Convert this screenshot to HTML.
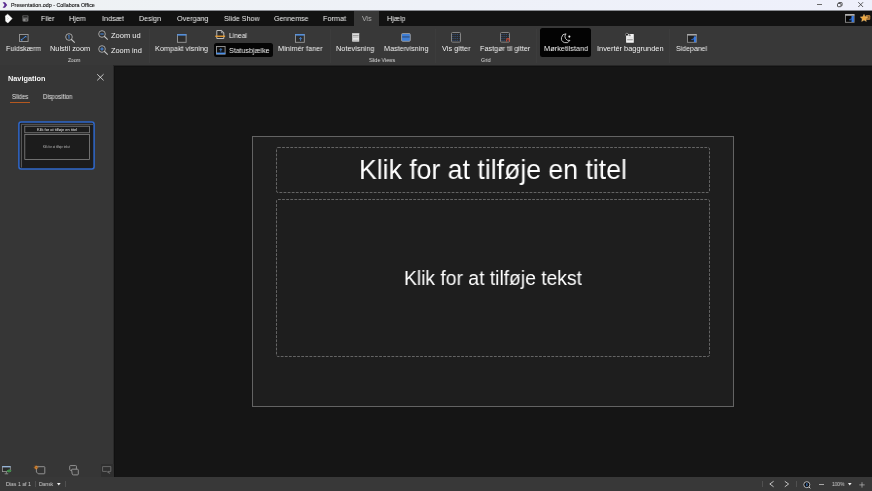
<!DOCTYPE html>
<html><head><meta charset="utf-8">
<style>
*{margin:0;padding:0;box-sizing:border-box}
html,body{width:872px;height:491px;overflow:hidden;background:#161616}
body{font-family:"Liberation Sans",sans-serif;position:relative}
.abs{position:absolute}
.tx{position:absolute;white-space:nowrap;will-change:transform}
svg{overflow:visible}
</style></head><body>
<div class="abs" style="left:0px;top:0px;width:872px;height:11px;background:linear-gradient(90deg,#eef2f3 0%,#eef1f8 50%,#eef0fb 100%);"></div>
<div class="abs" style="left:0px;top:10px;width:872px;height:1px;background:#8a8c92;"></div>
<div class="abs" style="left:0px;top:11px;width:872px;height:15px;background:#121212;"></div>
<div class="abs" style="left:354px;top:11px;width:25px;height:15px;background:#383838;"></div>
<div class="abs" style="left:0px;top:26px;width:872px;height:39px;background:#383838;"></div>
<div class="abs" style="left:0px;top:65px;width:872px;height:1px;background:#262626;"></div>
<div class="abs" style="left:0px;top:66px;width:113px;height:411px;background:#363636;"></div>
<div class="abs" style="left:113px;top:66px;width:759px;height:411px;background:#151515;"></div>
<div class="abs" style="left:113px;top:66px;width:759px;height:1px;background:#111111;"></div>
<div class="abs" style="left:113px;top:66px;width:1px;height:411px;background:#2a2a2a;"></div>
<div class="abs" style="left:114px;top:66px;width:1px;height:411px;background:#111111;"></div>
<div class="abs" style="left:0px;top:65px;width:113px;height:2px;background:#363636;"></div>
<div class="abs" style="left:0px;top:477px;width:872px;height:14px;background:#383838;"></div>
<svg class="abs" style="left:2px;top:2px" width="6" height="6" viewBox="0 0 6 6"><path d="M0.6 0.3 L3 0.3 L5.2 3 L3 5.7 L0.6 5.7 L2.6 3 Z" fill="#5a2d91"/></svg>
<div class="tx" style="left:10.70px;top:0px;font-size:5.39px;line-height:10px;color:#151515;-webkit-text-stroke:0.12px #222;will-change:transform;">Presentation.odp - Collabora Office</div>
<div class="abs" style="left:817px;top:4px;width:5px;height:1px;background:#6a6a6a;"></div>
<svg class="abs" style="left:836.6px;top:2px" width="6" height="6" viewBox="0 0 6 6"><rect x="0.5" y="1.5" width="3.5" height="3.2" rx="0.7" fill="none" stroke="#3a3a3a" stroke-width="0.85"/><path d="M1.5 1.3 V1 Q1.5 0.5 2 0.5 H4.5 Q5.1 0.5 5.1 1 V3.4 Q5.1 3.9 4.6 3.9 H4.2" fill="none" stroke="#3a3a3a" stroke-width="0.8"/></svg>
<svg class="abs" style="left:858px;top:2px" width="6" height="6" viewBox="0 0 6 6"><path d="M0.3 0.2 L5.1 5 M5.1 0.2 L0.3 5" stroke="#333" stroke-width="0.8" fill="none"/></svg>
<svg class="abs" style="left:5px;top:13.8px" width="8" height="9.2" viewBox="0 0 8 9.2"><path d="M2.7 0.3 L7.2 4.5 L2.9 8.9 L0.7 7.3 L0.4 1.9 Z" fill="#ffffff" stroke="#ffffff" stroke-width="0.5" stroke-linejoin="round"/><path d="M2.3 3.3 L3.5 4.5 L2.3 5.7" stroke="#b8b8b8" stroke-width="0.6" fill="none"/></svg>
<svg class="abs" style="left:21.6px;top:15px" width="7" height="7" viewBox="0 0 7 7"><rect x="0.3" y="0.3" width="6.2" height="6.2" rx="0.9" fill="#5a5a5a"/><rect x="1.4" y="0.9" width="4" height="1.5" fill="#2a2a2a"/><rect x="1.3" y="3.7" width="4.2" height="2.6" fill="#8a8a8a"/><rect x="3.6" y="4.2" width="1.1" height="1.6" fill="#2a2a2a"/></svg>
<div class="tx" style="left:40.60px;top:12px;font-size:7.40px;line-height:13px;color:#f1f1f1;transform:scaleX(0.9313);transform-origin:0 0;">Filer</div>
<div class="tx" style="left:69.40px;top:12px;font-size:7.40px;line-height:13px;color:#f1f1f1;transform:scaleX(0.9671);transform-origin:0 0;">Hjem</div>
<div class="tx" style="left:101.50px;top:12px;font-size:7.40px;line-height:13px;color:#f1f1f1;transform:scaleX(0.9725);transform-origin:0 0;">Indsæt</div>
<div class="tx" style="left:139.00px;top:12px;font-size:7.40px;line-height:13px;color:#f1f1f1;transform:scaleX(0.9551);transform-origin:0 0;">Design</div>
<div class="tx" style="left:176.50px;top:12px;font-size:7.40px;line-height:13px;color:#f1f1f1;transform:scaleX(0.9693);transform-origin:0 0;">Overgang</div>
<div class="tx" style="left:223.50px;top:12px;font-size:7.40px;line-height:13px;color:#f1f1f1;transform:scaleX(0.9589);transform-origin:0 0;">Slide Show</div>
<div class="tx" style="left:273.50px;top:12px;font-size:7.40px;line-height:13px;color:#f1f1f1;transform:scaleX(0.9531);transform-origin:0 0;">Gennemse</div>
<div class="tx" style="left:323.00px;top:12px;font-size:7.40px;line-height:13px;color:#f1f1f1;transform:scaleX(0.9814);transform-origin:0 0;">Format</div>
<div class="tx" style="left:362.00px;top:12px;font-size:7.40px;line-height:13px;color:#b4b4b4;transform:scaleX(0.9363);transform-origin:0 0;">Vis</div>
<div class="tx" style="left:386.50px;top:12px;font-size:7.40px;line-height:13px;color:#f1f1f1;transform:scaleX(0.9572);transform-origin:0 0;">Hjælp</div>
<svg class="abs" style="left:845px;top:14px" width="10" height="9" viewBox="0 0 10 9"><rect x="0.5" y="0.5" width="8.6" height="7.8" fill="#060606" stroke="#8c8c8c" stroke-width="0.9"/><rect x="0.3" y="0.2" width="9" height="1.5" fill="#bcbcbc"/><rect x="6.5" y="2" width="2.4" height="6" fill="#3a7be0"/><path d="M4.2 5.8 L6.2 5.8 L6.2 3.8" stroke="#2f68c4" stroke-width="1" fill="none"/></svg>
<svg class="abs" style="left:860px;top:14px" width="11" height="8" viewBox="0 0 11 8"><rect x="5.6" y="1.1" width="4.7" height="4.9" rx="1.2" fill="#a97738"/><path d="M7.6 2.4 Q8.6 2.1 8.8 3.1 Q8.8 3.8 7.9 4" stroke="#6f4a1f" stroke-width="0.6" fill="none"/><path d="M4 0.3 L5.1 2.7 L7.7 3 L5.8 4.8 L6.3 7.4 L4 6.1 L1.7 7.4 L2.2 4.8 L0.3 3 L2.9 2.7 Z" fill="#f0a83e" stroke="#f6cc88" stroke-width="0.4"/></svg>
<svg class="abs" style="left:19px;top:34px" width="10" height="8" viewBox="0 0 10 8"><rect x="0.5" y="0.5" width="8.6" height="7" fill="#2d2d2d" stroke="#9b9b9b" stroke-width="0.9"/><path d="M2.2 6 L7 2.2" stroke="#4a8fe8" stroke-width="0.9"/><path d="M5.4 1.9 L7.4 1.9 L7.4 3.8 Z" fill="#4a8fe8"/><path d="M1.8 4.6 L1.8 6.4 L3.8 6.4 Z" fill="#4a8fe8"/></svg>
<div class="tx" style="left:5.90px;top:42px;font-size:7.40px;line-height:13px;color:#f1f1f1;transform:scaleX(0.9539);transform-origin:0 0;">Fuldskærm</div>
<svg class="abs" style="left:64.4px;top:31.9px" width="12" height="12" viewBox="0 0 12 12"><circle cx="5" cy="5" r="3.3" fill="#2f2f2f" stroke="#b9b9b9" stroke-width="0.85"/><path d="M7.5 7.5 L10.5 10.3" stroke="#c4c4c4" stroke-width="1.05" stroke-linecap="round"/><path d="M5 3.2 V6.8 M4.3 3.9 L5 3.2" stroke="#4a8fe8" stroke-width="0.9" fill="none"/></svg>
<div class="tx" style="left:50.40px;top:42px;font-size:7.40px;line-height:13px;color:#f1f1f1;">Nulstil zoom</div>
<div class="tx" style="left:67.50px;top:55px;font-size:5.70px;line-height:10px;color:#dcdcdc;transform:scaleX(0.8579);transform-origin:0 0;">Zoom</div>
<svg class="abs" style="left:97.1px;top:28.6px" width="12" height="12" viewBox="0 0 12 12"><circle cx="5" cy="5" r="3.3" fill="#2f2f2f" stroke="#b9b9b9" stroke-width="0.85"/><path d="M7.5 7.5 L10.5 10.3" stroke="#c4c4c4" stroke-width="1.05" stroke-linecap="round"/><path d="M3.3 5 H6.7" stroke="#4a8fe8" stroke-width="1"/></svg>
<div class="tx" style="left:111.30px;top:29px;font-size:7.40px;line-height:13px;color:#f1f1f1;transform:scaleX(1.0204);transform-origin:0 0;">Zoom ud</div>
<svg class="abs" style="left:97.1px;top:44.3px" width="12" height="12" viewBox="0 0 12 12"><circle cx="5" cy="5" r="3.3" fill="#2f2f2f" stroke="#b9b9b9" stroke-width="0.85"/><path d="M7.5 7.5 L10.5 10.3" stroke="#c4c4c4" stroke-width="1.05" stroke-linecap="round"/><path d="M3.3 5 H6.7 M5 3.3 V6.7" stroke="#4a8fe8" stroke-width="1"/></svg>
<div class="tx" style="left:111.30px;top:44px;font-size:7.40px;line-height:13px;color:#f1f1f1;">Zoom ind</div>
<div class="abs" style="left:149px;top:29px;width:1px;height:34px;background:#3c3c3c;"></div>
<svg class="abs" style="left:177px;top:34px" width="10" height="9" viewBox="0 0 10 9"><rect x="0.5" y="0.5" width="8.6" height="7.8" fill="#2d2d2d" stroke="#9b9b9b" stroke-width="0.9"/><rect x="0.3" y="0.2" width="9" height="1.4" fill="#4a8fe8"/></svg>
<div class="tx" style="left:154.90px;top:42px;font-size:7.40px;line-height:13px;color:#f1f1f1;transform:scaleX(0.9780);transform-origin:0 0;">Kompakt visning</div>
<svg class="abs" style="left:215px;top:30px" width="11" height="9" viewBox="0 0 11 9"><path d="M1.8 0.5 H6.6 L8.8 2.6 V8.5 H1.8 Z" fill="#2d2d2d" stroke="#c9c9c9" stroke-width="0.9"/><path d="M6.4 0.6 V2.8 H8.6" fill="none" stroke="#c9c9c9" stroke-width="0.7"/><rect x="0.3" y="5.6" width="9.8" height="1.3" fill="#f0a030"/></svg>
<div class="tx" style="left:229.00px;top:29px;font-size:7.40px;line-height:13px;color:#f1f1f1;transform:scaleX(0.9113);transform-origin:0 0;">Lineal</div>
<div class="abs" style="left:213.5px;top:43px;width:59px;height:14px;background:#050505;border-radius:2.5px;"></div>
<svg class="abs" style="left:215.5px;top:46px" width="10" height="9" viewBox="0 0 10 9"><rect x="0.5" y="0.5" width="8.6" height="7.6" fill="#101010" stroke="#9b9b9b" stroke-width="0.9"/><rect x="0.3" y="6.6" width="9" height="1.6" fill="#4a8fe8"/><path d="M4.8 5.6 V2.8 M3.6 3.8 L4.8 2.6 L6 3.8" stroke="#4a8fe8" stroke-width="0.8" fill="none"/></svg>
<div class="tx" style="left:229.00px;top:44px;font-size:7.40px;line-height:13px;color:#f1f1f1;transform:scaleX(0.9491);transform-origin:0 0;">Statusbjælke</div>
<svg class="abs" style="left:295px;top:34px" width="10" height="9" viewBox="0 0 10 9"><rect x="0.5" y="0.5" width="8.8" height="7.8" fill="#2d2d2d" stroke="#9b9b9b" stroke-width="0.9"/><rect x="0.3" y="0.2" width="9.2" height="1.4" fill="#4a8fe8"/><path d="M5.6 6.8 V3.6 M4.3 4.8 L5.6 3.5 L6.9 4.8" stroke="#4a8fe8" stroke-width="0.8" fill="none"/></svg>
<div class="tx" style="left:278.00px;top:42px;font-size:7.40px;line-height:13px;color:#f1f1f1;transform:scaleX(0.9882);transform-origin:0 0;">Minimér faner</div>
<div class="abs" style="left:329.5px;top:29px;width:1px;height:34px;background:#3c3c3c;"></div>
<svg class="abs" style="left:352px;top:33px" width="8" height="9" viewBox="0 0 8 9"><rect x="0.2" y="0.2" width="7" height="8.4" fill="#e4e4e4"/><rect x="0.2" y="0.2" width="7" height="1" fill="#bdbdbd"/><rect x="0.8" y="2.2" width="5.8" height="1.1" fill="#8e8e8e"/><rect x="0.8" y="4.2" width="5.8" height="0.6" fill="#b0b0b0"/><rect x="0.8" y="6.6" width="5.8" height="1.6" fill="#c2c2c2"/></svg>
<div class="tx" style="left:336.10px;top:42px;font-size:7.40px;line-height:13px;color:#f1f1f1;transform:scaleX(0.9905);transform-origin:0 0;">Notevisning</div>
<svg class="abs" style="left:401px;top:33px" width="10" height="9" viewBox="0 0 10 9"><rect x="0.5" y="0.5" width="8.8" height="7.8" rx="1.2" fill="#3f7fd6" stroke="#9b9b9b" stroke-width="0.9"/><rect x="1.2" y="3.5" width="7.4" height="0.9" fill="#2c3f5e"/></svg>
<div class="tx" style="left:383.80px;top:42px;font-size:7.40px;line-height:13px;color:#f1f1f1;transform:scaleX(0.9748);transform-origin:0 0;">Mastervisning</div>
<div class="tx" style="left:369.00px;top:55px;font-size:5.70px;line-height:10px;color:#dcdcdc;transform:scaleX(0.8924);transform-origin:0 0;">Slide Views</div>
<div class="abs" style="left:434.5px;top:29px;width:1px;height:34px;background:#3c3c3c;"></div>
<svg class="abs" style="left:451.2px;top:32.2px" width="10" height="10" viewBox="0 0 10 10"><rect x="0.5" y="0.5" width="9" height="9.6" rx="1" fill="#2a2a2a" stroke="#8d8d8d" stroke-width="0.9"/><path d="M1.3 2.5 H8.7 M1.3 4.5 H8.7 M1.3 6.5 H8.7 M1.3 8.4 H8.7" stroke="#3b69ad" stroke-width="0.55" stroke-dasharray="1.3 0.9"/></svg>
<div class="tx" style="left:441.50px;top:42px;font-size:7.40px;line-height:13px;color:#f1f1f1;transform:scaleX(0.9911);transform-origin:0 0;">Vis gitter</div>
<svg class="abs" style="left:500.2px;top:32.2px" width="10" height="10" viewBox="0 0 10 10"><rect x="0.5" y="0.5" width="9" height="9.6" rx="1" fill="#2a2a2a" stroke="#8d8d8d" stroke-width="0.9"/><path d="M1.3 2.5 H8.7 M1.3 4.5 H8.7 M1.3 6.5 H8.7 M1.3 8.4 H8.7" stroke="#3b69ad" stroke-width="0.55" stroke-dasharray="1.3 0.9"/><path d="M6.7 9.6 V8 Q6.7 6.6 8 6.6 Q9.3 6.6 9.3 8 V9.6" stroke="#cc4630" stroke-width="1.1" fill="none"/></svg>
<div class="tx" style="left:479.70px;top:42px;font-size:7.40px;line-height:13px;color:#f1f1f1;transform:scaleX(0.9805);transform-origin:0 0;">Fastgør til gitter</div>
<div class="tx" style="left:481.00px;top:55px;font-size:5.70px;line-height:10px;color:#dcdcdc;transform:scaleX(0.9008);transform-origin:0 0;">Grid</div>
<div class="abs" style="left:536px;top:29px;width:1px;height:34px;background:#3c3c3c;"></div>
<div class="abs" style="left:539.6px;top:27.8px;width:51.4px;height:29px;background:#030303;border-radius:2.5px;"></div>
<svg class="abs" style="left:560.6px;top:32.6px" width="12" height="12" viewBox="0 0 12 12"><g transform="scale(0.9)"><path d="M5.6 0.9 A5 5 0 1 0 9.9 8.2 A4.4 4.4 0 0 1 5.6 0.9 Z" fill="none" stroke="#f2f2f2" stroke-width="0.85" stroke-linejoin="round"/><circle cx="9.3" cy="4" r="1.15" fill="#f2f2f2"/></g></svg>
<div class="tx" style="left:543.80px;top:42px;font-size:7.40px;line-height:13px;color:#f1f1f1;transform:scaleX(0.9930);transform-origin:0 0;">Mørketilstand</div>
<svg class="abs" style="left:625px;top:33px" width="10" height="10" viewBox="0 0 10 10"><rect x="1.1" y="0.9" width="7.7" height="8.8" rx="0.5" fill="#f2f2f2"/><rect x="2.2" y="5.9" width="5.6" height="1.5" fill="#a8a8a8"/><rect x="2.2" y="3.9" width="5.6" height="0.5" fill="#d0d0d0"/><circle cx="1.9" cy="1.6" r="1.35" fill="#101010" stroke="#f0f0f0" stroke-width="0.45"/><rect x="4.2" y="1.4" width="1" height="1" fill="#333"/><rect x="3.4" y="2.4" width="2.4" height="0.7" fill="#666"/></svg>
<div class="tx" style="left:596.70px;top:42px;font-size:7.40px;line-height:13px;color:#f1f1f1;">Invertér baggrunden</div>
<div class="abs" style="left:669px;top:29px;width:1px;height:34px;background:#3c3c3c;"></div>
<svg class="abs" style="left:686.6px;top:33.8px" width="10" height="9" viewBox="0 0 10 9"><rect x="0.5" y="0.5" width="8.8" height="7.8" fill="#202020" stroke="#8f8f8f" stroke-width="0.9"/><rect x="0.3" y="0.2" width="9.2" height="1.3" fill="#b4b4b4"/><rect x="6.9" y="2.4" width="2.2" height="5.7" fill="#3a7be0"/><path d="M4.3 5.6 L6.3 5.6 L6.3 3.8" stroke="#336fd0" stroke-width="0.9" fill="none"/></svg>
<div class="tx" style="left:675.90px;top:42px;font-size:7.40px;line-height:13px;color:#f1f1f1;transform:scaleX(0.9448);transform-origin:0 0;">Sidepanel</div>
<div class="tx" style="left:7.60px;top:72px;font-size:7.34px;line-height:13px;color:#f5f5f5;font-weight:bold;">Navigation</div>
<svg class="abs" style="left:97px;top:74.3px" width="7" height="7" viewBox="0 0 7 7"><path d="M0.2 0.2 L6.6 6.4 M6.6 0.2 L0.2 6.4" stroke="#e8e8e8" stroke-width="0.8"/></svg>
<div class="tx" style="left:11.80px;top:91px;font-size:6.30px;line-height:11px;color:#e4e4e4;transform:scaleX(0.9499);transform-origin:0 0;">Slides</div>
<div class="abs" style="left:10.2px;top:101.8px;width:19.6px;height:1px;background:#b5581f;"></div>
<div class="tx" style="left:42.90px;top:91px;font-size:6.30px;line-height:11px;color:#e4e4e4;transform:scaleX(0.9508);transform-origin:0 0;">Disposition</div>
<svg class="abs" style="left:17px;top:120px" width="80" height="52" viewBox="0 0 80 52"><rect x="1.9" y="2" width="75.2" height="46.9" rx="2.2" fill="#1c1c1c" stroke="#2f68cc" stroke-width="1.5"/><path d="M4.4 47.6 V4.3 H76" fill="none" stroke="#6e6e6e" stroke-width="0.8"/><rect x="7.8" y="6.2" width="64.6" height="6.6" fill="none" stroke="#8a8a8a" stroke-width="0.75"/><rect x="7.8" y="14.6" width="64.6" height="24.9" fill="none" stroke="#8a8a8a" stroke-width="0.75"/></svg>
<div class="tx" style="left:36.80px;top:125px;font-size:3.99px;line-height:9px;color:#e8e8e8;">Klik for at tilføje en titel</div>
<div class="tx" style="left:43.00px;top:143px;font-size:2.91px;line-height:8px;color:#bbbbbb;">Klik for at tilføje tekst</div>
<svg class="abs" style="left:2px;top:466px" width="11" height="10" viewBox="0 0 11 10"><rect x="0.5" y="0.7" width="7.8" height="4.9" fill="#2b2b2b" stroke="#9a9a9a" stroke-width="0.8"/><rect x="0.2" y="0.2" width="8.4" height="1.1" fill="#9cc3ee"/><path d="M4.4 5.8 V7.5 M2.6 7.8 H6.2" stroke="#9a9a9a" stroke-width="0.8"/><path d="M4.9 3.9 L6.6 3.9 L6.6 2.7 L9.8 4.8 L6.6 6.9 L6.6 5.7 L4.9 5.7 Z" fill="#3b8c47"/></svg>
<svg class="abs" style="left:34px;top:465px" width="12" height="10" viewBox="0 0 12 10"><path d="M2.4 1.7 H10.2 Q10.8 1.7 10.8 2.3 V8.2 Q10.8 8.8 10.2 8.8 H4.2 L2.4 7 Z" fill="#343434" stroke="#9c9c9c" stroke-width="0.9"/><path d="M2.1 0 V4.8 M-0.3 2.4 H4.5 M0.4 0.7 L3.8 4.1 M3.8 0.7 L0.4 4.1" stroke="#d8822c" stroke-width="0.5"/><circle cx="2.1" cy="2.4" r="1.25" fill="#e88a2a"/><circle cx="2.1" cy="2.4" r="0.5" fill="#7a4a1a"/></svg>
<svg class="abs" style="left:68.6px;top:464.8px" width="10" height="11" viewBox="0 0 10 11"><path d="M1.4 0.6 H6.6 Q7.6 0.6 7.5 1.6 L7.2 5.4 H1.6 Q0.7 5.4 0.7 4.4 V1.4 Q0.7 0.6 1.4 0.6 Z" fill="none" stroke="#9c9c9c" stroke-width="0.9"/><path d="M3.2 4.2 H8.4 Q9.3 4.2 9.3 5.1 V9 Q9.3 9.9 8.4 9.9 H4.4 Q3.4 9.9 3.2 9 L2.6 5 Q2.6 4.2 3.2 4.2 Z" fill="#3a3a3a" stroke="#9c9c9c" stroke-width="0.9"/></svg>
<div class="abs" style="left:101px;top:463.5px;width:12.6px;height:13.5px;background:#2f2f2f;"></div>
<svg class="abs" style="left:102px;top:466.4px" width="10" height="9" viewBox="0 0 10 9"><path d="M0.6 0.6 H8.8 V5.4 H6 L7.6 7.4 L4.6 5.4 H0.6 Z" fill="none" stroke="#6f6f6f" stroke-width="0.9"/></svg>
<div class="abs" style="left:252px;top:136px;width:482px;height:271px;background:#1e1e1e;border:1px solid #636363;"></div>
<svg class="abs" style="left:276px;top:147px" width="434" height="46"><rect x="0.5" y="0.5" width="433" height="45" rx="1.5" fill="none" stroke="#646464" stroke-width="1" stroke-dasharray="2.8 1.3"/></svg>
<svg class="abs" style="left:276px;top:199px" width="434" height="158"><rect x="0.5" y="0.5" width="433" height="157" rx="1.5" fill="none" stroke="#646464" stroke-width="1" stroke-dasharray="2.8 1.3"/></svg>
<div class="tx" style="left:359.00px;top:152px;font-size:27.40px;line-height:35px;color:#ffffff;transform:scaleX(0.9723);transform-origin:0 0;">Klik for at tilføje en titel</div>
<div class="tx" style="left:404.00px;top:265px;font-size:19.90px;line-height:26px;color:#ffffff;transform:scaleX(0.9697);transform-origin:0 0;">Klik for at tilføje tekst</div>
<div class="tx" style="left:5.50px;top:479px;font-size:5.70px;line-height:10px;color:#cfcfcf;transform:scaleX(0.9175);transform-origin:0 0;">Dias 1 af 1</div>
<div class="abs" style="left:35px;top:481.4px;width:1px;height:6px;background:#505050;"></div>
<div class="tx" style="left:39.20px;top:479px;font-size:5.70px;line-height:10px;color:#cfcfcf;transform:scaleX(0.8789);transform-origin:0 0;">Dansk</div>
<svg class="abs" style="left:57px;top:483.2px" width="4" height="3" viewBox="0 0 4 3"><path d="M0 0 H3.6 L1.8 2.4 Z" fill="#f0f0f0"/></svg>
<div class="abs" style="left:65px;top:481.4px;width:1px;height:6px;background:#505050;"></div>
<div class="abs" style="left:762px;top:481.2px;width:1px;height:6px;background:#505050;"></div>
<svg class="abs" style="left:769.4px;top:481.2px" width="6" height="7" viewBox="0 0 6 7"><path d="M4.6 0.3 L0.8 3 L4.6 5.8" fill="none" stroke="#d0d0d0" stroke-width="0.9"/></svg>
<svg class="abs" style="left:784.4px;top:481.2px" width="6" height="7" viewBox="0 0 6 7"><path d="M0.8 0.3 L4.6 3 L0.8 5.8" fill="none" stroke="#d0d0d0" stroke-width="0.9"/></svg>
<div class="abs" style="left:796px;top:481.2px;width:1px;height:6px;background:#505050;"></div>
<svg class="abs" style="left:802.5px;top:480.5px" width="9" height="9" viewBox="0 0 9 9"><circle cx="3.8" cy="3.7" r="3" fill="#0a0a0a" stroke="#d8d8d8" stroke-width="0.8"/><path d="M3.9 2.2 V5.2" stroke="#4a8fe8" stroke-width="1"/><path d="M6 6 L7.4 7.4" stroke="#d8d8d8" stroke-width="0.9"/></svg>
<div class="abs" style="left:818.8px;top:484px;width:5.4px;height:1px;background:#a8a8a8;"></div>
<div class="tx" style="left:832.00px;top:479px;font-size:5.50px;line-height:10px;color:#cfcfcf;transform:scaleX(0.8815);transform-origin:0 0;">100%</div>
<svg class="abs" style="left:847.5px;top:483.2px" width="4" height="3" viewBox="0 0 4 3"><path d="M0 0 H3.6 L1.8 2.4 Z" fill="#f0f0f0"/></svg>
<svg class="abs" style="left:859px;top:481.5px" width="6" height="6" viewBox="0 0 6 6"><path d="M0.3 2.9 H5.7 M3 0.2 V5.6" stroke="#b0b0b0" stroke-width="0.75"/></svg>
</body></html>
